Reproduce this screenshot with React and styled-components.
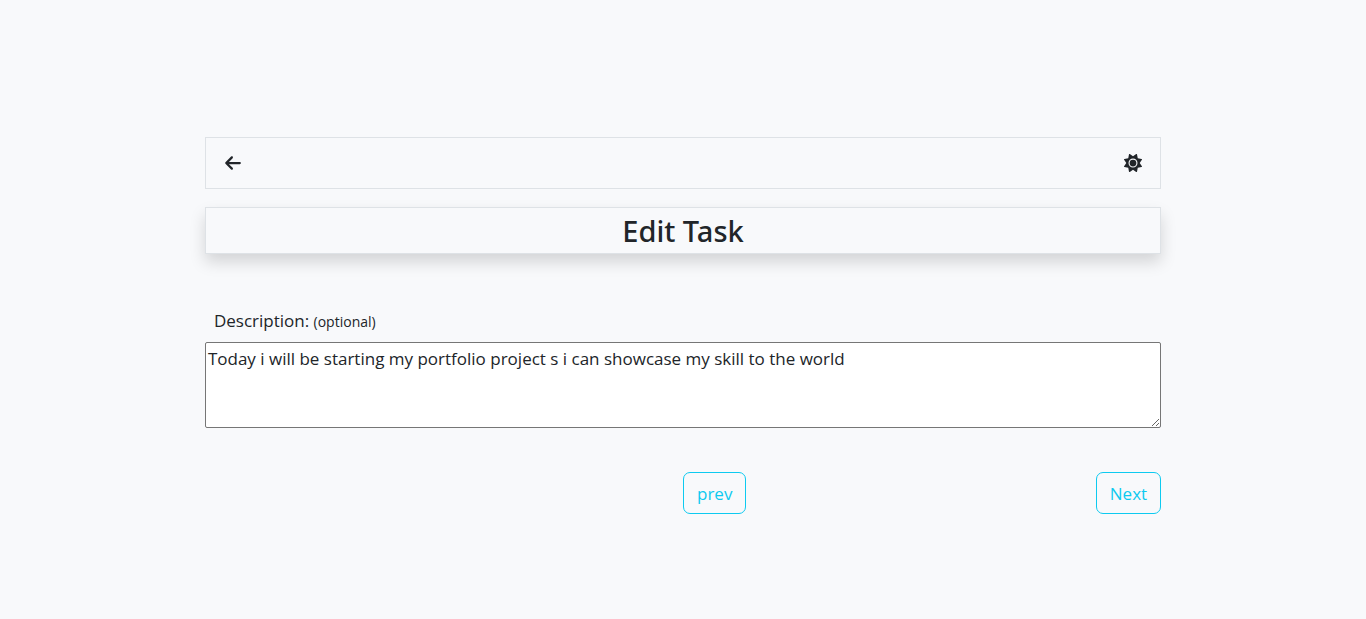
import React from "react";
import styled, { createGlobalStyle } from "styled-components";
import { FaArrowLeft, FaSun } from "react-icons/fa6";

const GlobalStyle = createGlobalStyle`
  *, *::before, *::after {
    box-sizing: border-box;
  }
  body {
    margin: 0;
    background: #f8f9fb;
    color: #212529;
    font-family: "Segoe UI", "Open Sans", "Noto Sans", sans-serif;
    font-size: 17px;
    line-height: 27px;
  }
`;

const Page = styled.main`
  width: 70%;
  margin: 0 auto;
  padding: 137px 0 48px;
`;

const Toolbar = styled.header`
  display: flex;
  align-items: center;
  justify-content: space-between;
  height: 52px;
  padding: 0 18px;
  border: 1px solid #dee2e6;
`;

const IconButton = styled.button`
  display: flex;
  padding: 0;
  border: 0;
  background: none;
  color: #212529;
  font-size: 18px;
  cursor: pointer;
`;

const Title = styled.h1`
  margin: 18px 0 0;
  padding: 4px 0;
  border: 1px solid #dee2e6;
  background: #f8f9fb;
  box-shadow: 0 8px 16px rgba(0, 0, 0, 0.15);
  font-family: "Segoe UI", "Noto Sans", sans-serif;
  font-size: 29px;
  font-weight: 500;
  line-height: 37px;
  text-align: center;
`;

const Form = styled.form`
  margin-top: 53px;
`;

const Label = styled.label`
  display: block;
  padding: 0 9px;
`;

const Hint = styled.small`
  font-size: 14px;
`;

const Description = styled.textarea`
  display: block;
  width: 100%;
  height: 86px;
  margin-top: 7px;
  padding: 2px;
  border: 1px solid #767676;
  border-radius: 2px;
  background: #fff;
  color: #212529;
  font: inherit;
  resize: vertical;
`;

const Actions = styled.div`
  display: grid;
  grid-template-columns: 1fr 1fr;
  margin-top: 44px;
`;

const StepButton = styled.button`
  grid-column: 2;
  grid-row: 1;
  justify-self: ${({ $align }) => $align};
  height: 42px;
  padding: 0 13px;
  border: 1px solid #0dcaf0;
  border-radius: 7px;
  background: transparent;
  color: #0dcaf0;
  font: inherit;
  cursor: pointer;
`;

export default function App() {
  return (
    <>
      <GlobalStyle />
      <Page>
        <Toolbar>
          <IconButton type="button" aria-label="Back">
            <FaArrowLeft />
          </IconButton>
          <IconButton type="button" aria-label="Toggle theme">
            <FaSun />
          </IconButton>
        </Toolbar>
        <Title>Edit Task</Title>
        <Form onSubmit={(event) => event.preventDefault()}>
          <Label htmlFor="description">
            Description: <Hint>(optional)</Hint>
          </Label>
          <Description
            id="description"
            defaultValue="Today i will be starting my portfolio project s i can showcase my skill to the world"
          />
          <Actions>
            <StepButton type="button" $align="start">prev</StepButton>
            <StepButton type="submit" $align="end">Next</StepButton>
          </Actions>
        </Form>
      </Page>
    </>
  );
}
